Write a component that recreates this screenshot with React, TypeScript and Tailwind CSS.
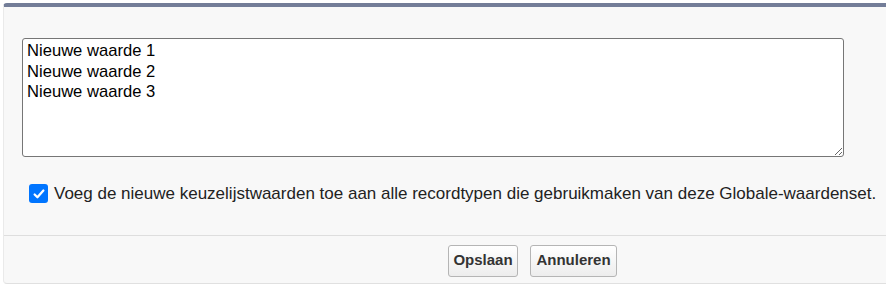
export default function App() {
    return (
        <div className="h-[287px] w-[886px] overflow-hidden bg-white pl-[3px] pt-[3px] font-['Liberation_Sans',Arial,sans-serif]">
            <div className="flex h-[281px] w-[900px] flex-col rounded-[4px] border-t-[4px] border-b border-l border-t-[#737d98] border-b-[#e0e0e0] border-l-[#eaeaea] bg-[#f8f8f8]">
                <div className="pl-[18px] pt-[31px]">
                    <textarea
                        className="block h-[119px] w-[822px] rounded-[3px] border border-[#767676] bg-white px-[4px] pt-[2px] text-[16.6px] leading-[20.5px] text-black outline-none"
                        defaultValue={"Nieuwe waarde 1\nNieuwe waarde 2\nNieuwe waarde 3"}
                    />
                    <label className="mt-[24px] flex items-center gap-[6px] pl-[7px] text-[17px] text-[#222]">
                        <span className="flex h-[19px] w-[19px] shrink-0 items-center justify-center rounded-[3px] bg-[#0075ff]">
                            <svg viewBox="0 0 16 16" className="h-[14px] w-[14px]" fill="none" stroke="white" strokeWidth="2.6" strokeLinecap="round" strokeLinejoin="round">
                                <path d="M3 8.5l3.2 3.2L13 4" />
                            </svg>
                        </span>
                        Voeg de nieuwe keuzelijstwaarden toe aan alle recordtypen die gebruikmaken van deze Globale-waardenset.
                    </label>
                </div>
                <div className="mt-[28px] w-[883px] border-t border-[#dedede]" />
                <div className="flex w-[883px] gap-[12px] pl-[444px] pt-[9px]">
                    <button className="h-[32px] w-[70px] rounded-[3px] border border-[#b5b5b5] bg-gradient-to-b from-white to-[#ededed] text-[15px] font-bold text-[#333]">
                        Opslaan
                    </button>
                    <button className="h-[32px] w-[87px] rounded-[3px] border border-[#b5b5b5] bg-gradient-to-b from-white to-[#ededed] text-[15px] font-bold text-[#333]">
                        Annuleren
                    </button>
                </div>
            </div>
        </div>
    )
}
